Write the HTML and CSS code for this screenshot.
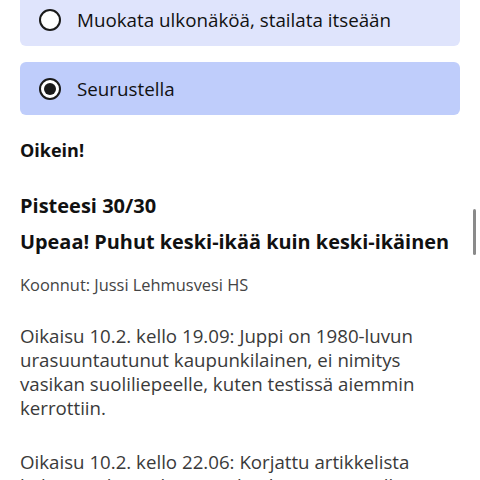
FILE: index.html
```html
<!DOCTYPE html>
<html lang="fi">
<head>
<meta charset="utf-8">
<link rel="stylesheet" href="styles.css">
</head>
<body>
<div class="page">
  <div class="option">
    <span class="radio"></span>
    <span class="label">Muokata ulkonäköä, stailata itseään</span>
  </div>
  <div class="option selected">
    <span class="radio checked"></span>
    <span class="label">Seurustella</span>
  </div>
  <p class="result">Oikein!</p>
  <h2 class="score">Pisteesi 30/30</h2>
  <h2 class="verdict">Upeaa! Puhut keski-ikää kuin keski-ikäinen</h2>
  <p class="byline">Koonnut: Jussi Lehmusvesi HS</p>
  <p class="note">Oikaisu 10.2. kello 19.09: Juppi on 1980-luvun urasuuntautunut kaupunkilainen, ei nimitys vasikan suoliliepeelle, kuten testissä aiemmin kerrottiin.</p>
  <p class="note">Oikaisu 10.2. kello 22.06: Korjattu artikkelista kohta, jonka mukaan perkat laitettaisiin jalkaan.</p>
</div>
<div class="scrollbar"></div>
</body>
</html>
```
FILE: styles.css
```css
html, body {
  margin: 0;
  padding: 0;
  background: #fff;
  overflow: hidden;
  height: 480px;
}
body {
  font-family: "Open Sans", "Noto Sans", sans-serif;
  color: #111;
}
.page {
  padding: 0 20px;
  margin-top: -7px;
}
.option {
  display: flex;
  align-items: center;
  gap: 16px;
  height: 53px;
  padding: 0 19px;
  border-radius: 6px;
  background: #dfe4fc;
  margin-bottom: 16px;
}
.option.selected {
  background: #bfcdfb;
}
.radio {
  width: 18px;
  height: 18px;
  border: 2px solid #1a1a1a;
  border-radius: 50%;
  background: #fff;
  flex: none;
  box-sizing: content-box;
  position: relative;
}
.radio.checked::after {
  content: "";
  position: absolute;
  left: 3px;
  top: 3px;
  width: 12px;
  height: 12px;
  border-radius: 50%;
  background: #1a1a1a;
}
.label {
  font-size: 18.8px;
  color: #111;
}
.result {
  font-size: 18px;
  font-weight: 700;
  margin: 23px 0 0;
}
.score {
  font-size: 20px;
  font-weight: 700;
  margin: 30px 0 0;
}
.verdict {
  font-size: 19.9px;
  font-weight: 700;
  margin: 9px 0 0;
}
.byline {
  font-size: 16.4px;
  color: #444;
  margin: 18px 0 0;
}
.note {
  font-size: 18.7px;
  line-height: 24px;
  color: #3a3a3a;
  margin: 30px 0 0;
}
.byline + .note {
  margin-top: 28px;
}
.scrollbar {
  position: absolute;
  left: 473px;
  top: 209px;
  width: 3px;
  height: 46px;
  border-radius: 2px;
  background: #8a8a8a;
}
```
